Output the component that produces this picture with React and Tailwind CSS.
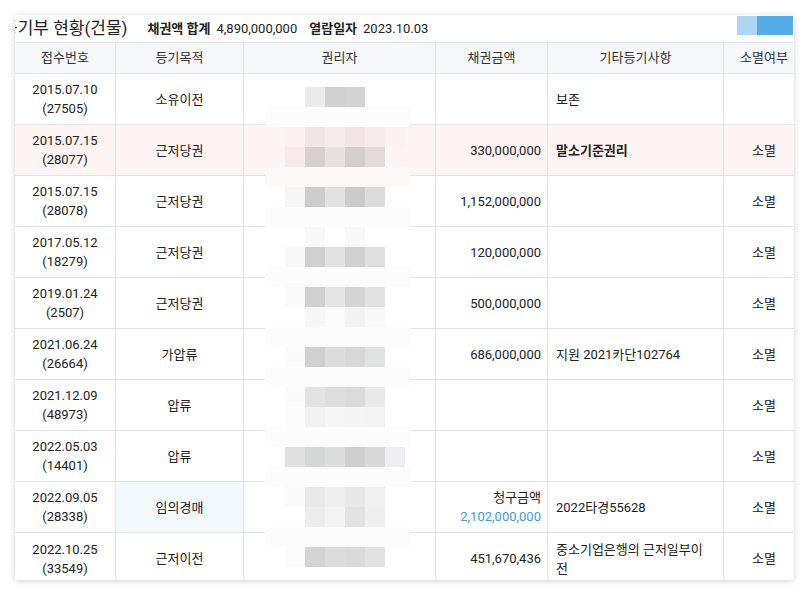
import React from 'react';

const cols = [
  { key: 'no', label: '접수번호', w: 'w-[101px]', align: 'justify-center text-center' },
  { key: 'purpose', label: '등기목적', w: 'w-[128px]', align: 'justify-center text-center' },
  { key: 'holder', label: '권리자', w: 'w-[192px]', align: 'justify-center text-center' },
  { key: 'amount', label: '채권금액', w: 'w-[112px]', align: 'justify-end text-right' },
  { key: 'etc', label: '기타등기사항', w: 'w-[176px]', align: 'justify-start text-left' },
  { key: 'gone', label: '소멸여부', w: 'w-[80px]', align: 'justify-center text-center' },
];

const rows = [
  { date: '2015.07.10', no: '27505', purpose: '소유이전', amount: '', etc: '보존', gone: '' },
  { date: '2015.07.15', no: '28077', purpose: '근저당권', amount: '330,000,000', etc: '말소기준권리', gone: '소멸', pink: true, bold: true },
  { date: '2015.07.15', no: '28078', purpose: '근저당권', amount: '1,152,000,000', etc: '', gone: '소멸' },
  { date: '2017.05.12', no: '18279', purpose: '근저당권', amount: '120,000,000', etc: '', gone: '소멸' },
  { date: '2019.01.24', no: '2507', purpose: '근저당권', amount: '500,000,000', etc: '', gone: '소멸' },
  { date: '2021.06.24', no: '26664', purpose: '가압류', amount: '686,000,000', etc: '지원 2021카단102764', gone: '소멸' },
  { date: '2021.12.09', no: '48973', purpose: '압류', amount: '', etc: '', gone: '소멸' },
  { date: '2022.05.03', no: '14401', purpose: '압류', amount: '', etc: '', gone: '소멸' },
  { date: '2022.09.05', no: '28338', purpose: '임의경매', claim: '2,102,000,000', etc: '2022타경55628', gone: '소멸', blue: true },
  { date: '2022.10.25', no: '33549', purpose: '근저이전', amount: '451,670,436', etc: '중소기업은행의 근저일부이전', gone: '소멸', last: true },
];

// pixelated cover over the holder column, 20px blocks, one line per block row
const F = 'band';
const mosaic = [
  [0, 0, '#ebebeb', '#d0d0d0', '#d3d3d3', 0, 0],
  F,
  [0, '#fdf0f0', '#f3e5e5', '#f7eaea', '#f3e5e6', '#f6ebeb', '#fdf2f2'],
  [0, '#f8eaea', '#d8cfd0', '#eadede', '#d6cdcf', '#e3dadb', 0],
  'pinkband',
  [0, '#f6f6f6', '#cdcdcd', '#e2e2e2', '#cbcbcb', '#dbdbdb', 0],
  F,
  [0, 0, '#f8f8f8', 0, '#f8f8f8', 0, 0],
  [0, '#f8f8f8', '#d0d0d0', '#e2e2e2', '#d1d1d1', '#dfdfdf', 0],
  F,
  [0, '#f9f9f9', '#d0d0d0', '#e5e5e5', '#d5d5d5', '#e2e2e2', 0],
  [0, 0, '#f7f7f7', '#fbfbfb', '#f3f3f3', '#f8f8f8', 0],
  F,
  [0, '#fafafa', '#d0d0d0', '#dcdcdc', '#d8d8d8', '#e0e1e1', 0],
  F,
  [0, '#fafafa', '#e3e3e3', '#dedede', '#dbdbdb', '#e9e9e9', 0],
  [0, '#fcfcfc', '#f2f2f2', '#f6f6f6', '#f5f5f5', '#f4f4f4', 0],
  F,
  [0, '#e0e0e0', '#d6d8d8', '#dcdcdc', '#cfcfcf', '#d9d9d9', '#eeeef0'],
  F,
  [0, '#fafafa', '#e9e9e9', '#efefef', '#e8e8e8', '#f0f0f0', 0],
  [0, 0, '#ececec', '#f4f4f4', '#e3e3e3', '#efefef', 0],
  F,
  [0, '#fcfcfc', '#d4d4d4', '#dcdcdc', '#dadada', '#e2e2e2', 0],
];

const Mosaic = () => (
  <div className="absolute left-[250px] top-[72px] flex flex-col">
    {mosaic.map((line, i) => {
      if (line === 'band') return <div key={i} className="h-5 w-[145px] bg-[#fcfcfc]" />;
      if (line === 'pinkband') return <div key={i} className="h-5 w-[145px] bg-[#fdf9f9]" />;
      return (
        <div key={i} className="flex h-5">
          {line.map((c, j) => (
            <div key={j} className="h-5 w-5" style={{ backgroundColor: c || 'transparent' }} />
          ))}
        </div>
      );
    })}
  </div>
);

const Cell = ({ col, className = '', children }) => (
  <div
    className={`${col.w} shrink-0 flex items-center px-2 ${col.align} ${
      col.key === 'gone' ? '' : 'border-r border-[#e2e4ea]'
    } ${className}`}
  >
    {children}
  </div>
);

const App = () => {
  return (
    <div className="w-[809px] h-[595px] bg-white pt-[15px] pl-[15px] font-['Roboto','Noto_Sans_CJK_KR',sans-serif] text-[13px] text-[#222]">
      <div className="relative w-[779px] h-[565px] overflow-hidden bg-white shadow-[0_1px_6px_rgba(0,0,0,0.18)]">
        {/* title bar */}
        <div className="flex h-[27px] items-center whitespace-nowrap">
          <span className="-ml-[13px] text-[17px] text-[#222]">등기부 현황(건물)</span>
          <span className="ml-[20px] font-bold">채권액 합계</span>
          <span className="ml-[6px]">4,890,000,000</span>
          <span className="ml-[12px] font-bold">열람일자</span>
          <span className="ml-[6px]">2023.10.03</span>
          <div className="ml-auto mr-px flex self-start mt-px">
            <div className="h-[19px] w-5 bg-[#aed6f3]" />
            <div className="h-[19px] w-9 bg-[#57abe6]" />
          </div>
        </div>

        {/* table */}
        <div className="w-[789px]">
          <div className="flex h-[32px] border-y border-[#e2e4ea] bg-[#f7f8fa] text-[#333]">
            {cols.map((c) => (
              <Cell key={c.key} col={{ ...c, align: 'justify-center text-center' }}>
                {c.label}
              </Cell>
            ))}
          </div>

          {rows.map((r) => (
            <div
              key={r.date + r.no}
              className={`flex h-[51px] leading-[19px] ${r.last ? '' : 'border-b border-[#e2e4ea]'} ${
                r.pink ? 'bg-[#fff4f4]' : ''
              }`}
            >
              <Cell col={cols[0]}>
                <div>
                  {r.date}
                  <br />({r.no})
                </div>
              </Cell>
              <Cell col={cols[1]} className={r.blue ? 'bg-[#f4f9fe]' : ''}>
                {r.purpose}
              </Cell>
              <Cell col={cols[2]} />
              <Cell col={cols[3]} className="pr-[6px]">
                {r.claim ? (
                  <div>
                    청구금액
                    <br />
                    <span className="text-[#4a9ad6]">{r.claim}</span>
                  </div>
                ) : (
                  r.amount
                )}
              </Cell>
              <Cell col={cols[4]} className={`break-all pr-[14px] ${r.bold ? 'font-bold' : ''}`}>
                <div>{r.etc}</div>
              </Cell>
              <Cell col={cols[5]}>{r.gone}</Cell>
            </div>
          ))}
        </div>

        <Mosaic />
      </div>
    </div>
  );
};

export default App;
